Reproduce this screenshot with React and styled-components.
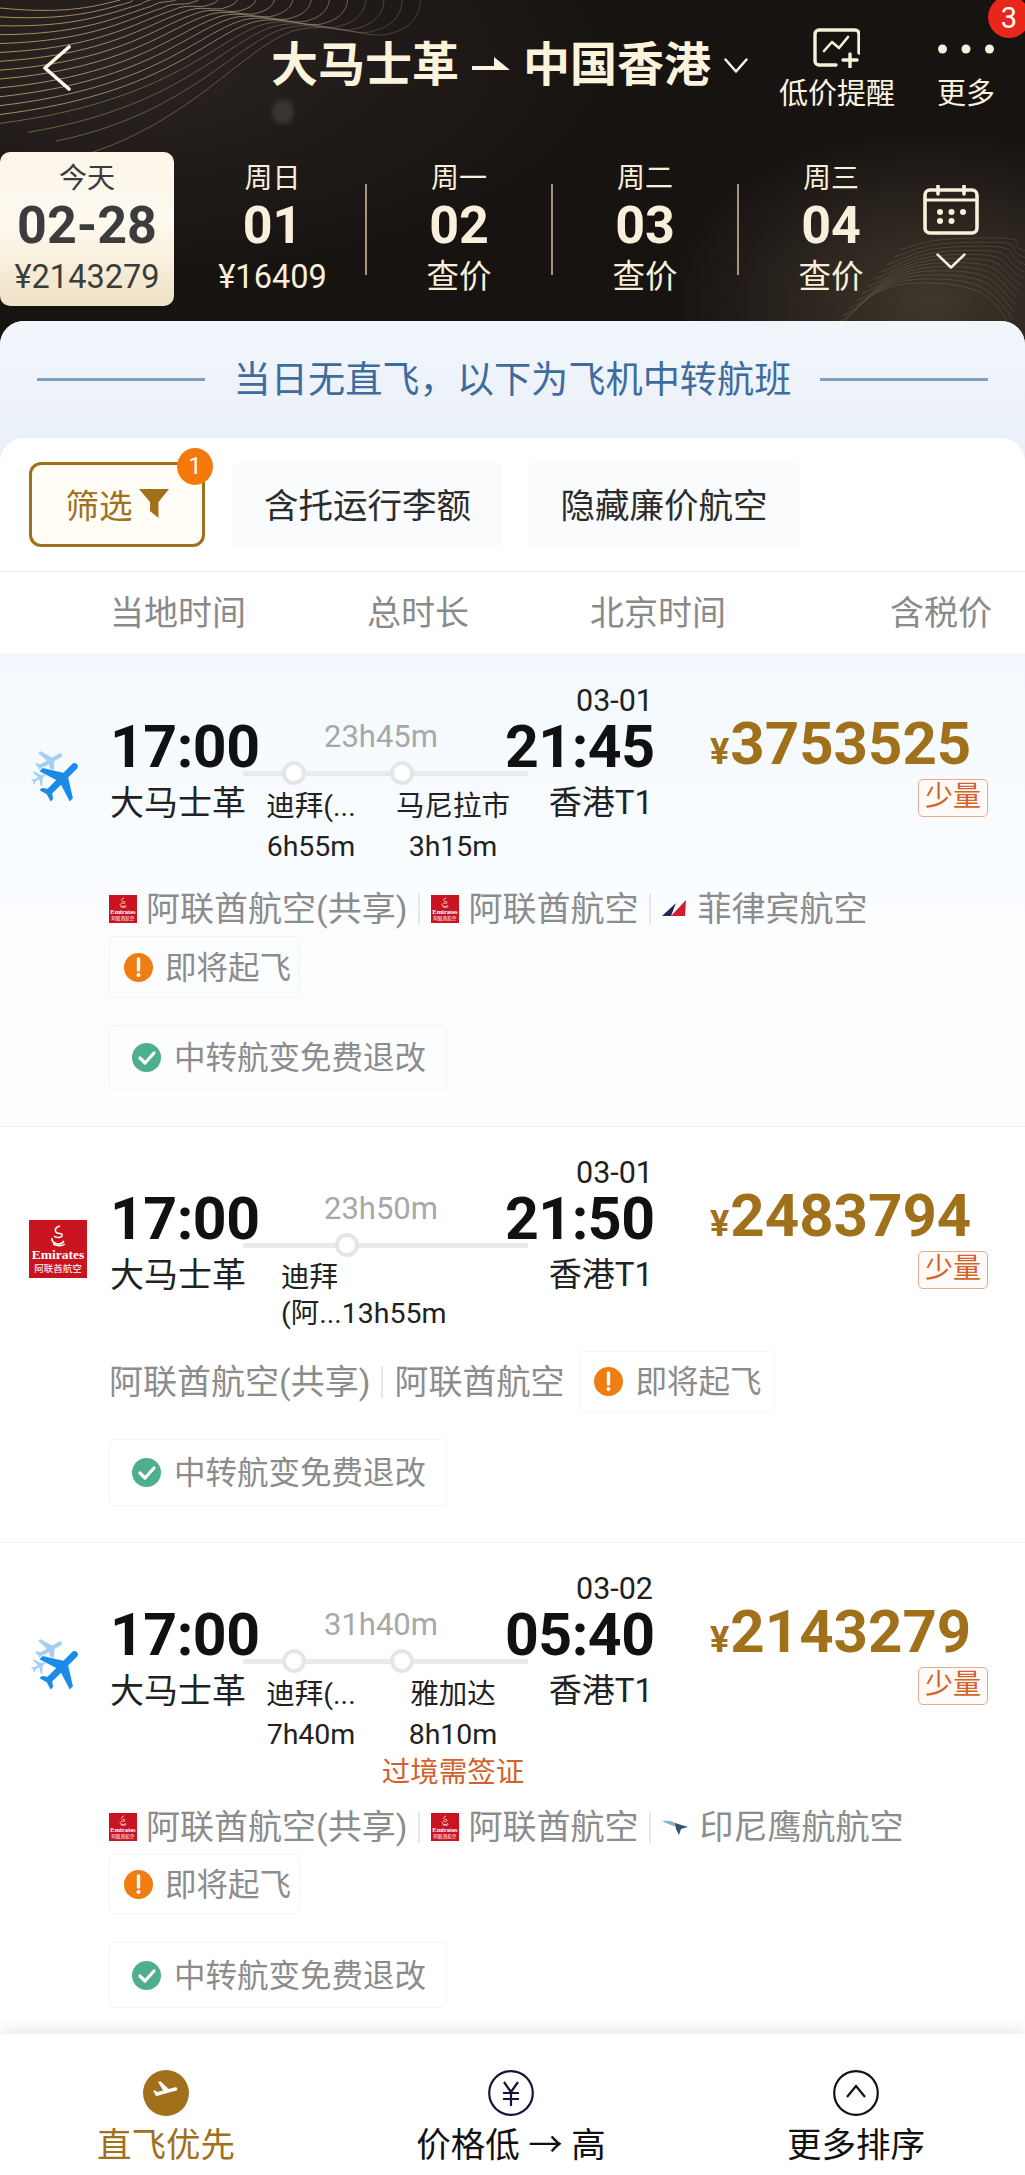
import React from "react";
import styled, { createGlobalStyle } from "styled-components";

const GOLD = "#a0701a";
const CREAM = "#f8f0da";

const GlobalStyle = createGlobalStyle`
  html, body { margin: 0; padding: 0; background: #fff; }
  * { box-sizing: border-box; }
  body { font-family: Roboto, "Noto Sans CJK SC", sans-serif; }
`;

const Screen = styled.div`
  width: 1025px;
  height: 2175px;
  overflow: hidden;
  display: flex;
  flex-direction: column;
`;

/* ---------- header ---------- */
const Header = styled.header`
  position: relative;
  height: 345px;
  flex: none;
  overflow: hidden;
  background: radial-gradient(ellipse 260px 170px at 930px 300px, #3f372c 0%, rgba(63, 55, 44, 0) 100%),
    radial-gradient(ellipse 500px 220px at 120px 60px, #2a2421 0%, rgba(42, 36, 33, 0) 100%), #171311;
`;
const Backdrop = styled.svg`
  position: absolute;
  left: 0;
  top: 0;
`;
const TopBar = styled.div`
  position: relative;
  height: 152px;
  padding: 28px 30px 0 42px;
  display: flex;
  align-items: flex-start;
`;
const Back = styled.svg`
  margin-top: 17px;
  margin-right: 199px;
  flex: none;
`;
const Title = styled.div`
  margin-top: 14px;
  display: flex;
  align-items: center;
  gap: 13px;
  font-size: 47px;
  line-height: 46px;
  font-weight: 700;
  color: #fbf3dc;
`;
const Actions = styled.div`
  margin-left: auto;
  display: flex;
  gap: 42px;
`;
const Action = styled.div`
  display: flex;
  flex-direction: column;
  align-items: center;
  font-size: 29px;
  line-height: 32px;
  color: #fbf3e2;
  svg {
    margin-bottom: 10px;
  }
`;
const RedBadge = styled.div`
  position: absolute;
  right: -5px;
  top: -4px;
  width: 42px;
  height: 42px;
  border-radius: 50%;
  background: #e8261c;
  color: #fff;
  font-size: 29px;
  line-height: 44px;
  text-align: center;
`;
const DateStrip = styled.div`
  position: relative;
  height: 154px;
  display: flex;
  align-items: stretch;
`;
const DayCol = styled.div`
  width: ${(p) => p.$w || 184}px;
  margin-left: ${(p) => p.$ml || 0}px;
  flex: none;
  display: flex;
  flex-direction: column;
  align-items: center;
  padding-top: 10px;
  color: ${(p) => (p.$active ? "#3c3c3c" : CREAM)};
  background: ${(p) => (p.$active ? "linear-gradient(180deg, #fbf6e8 0%, #fffaf0 45%, #efe2c6 100%)" : "none")};
  border-radius: ${(p) => (p.$active ? "10px" : "0")};
`;
const Week = styled.div`
  font-size: 28px;
  line-height: 34px;
`;
const DayNum = styled.div`
  margin-top: 5px;
  font-size: 52px;
  line-height: 50px;
  font-weight: 700;
`;
const DayPrice = styled.div`
  margin-top: 8px;
  font-size: 32.5px;
  line-height: 36px;
`;
const DaySep = styled.div`
  flex: none;
  align-self: center;
  width: 2px;
  height: 91px;
  background: #a8957d;
`;
const CalendarCol = styled.div`
  width: 56px;
  flex: none;
  padding-top: 33px;
  display: flex;
  flex-direction: column;
  align-items: center;
  gap: 18px;
`;

/* ---------- notice + filters ---------- */
const Body = styled.main`
  position: relative;
  margin-top: -24px;
  flex: 1;
  border-radius: 24px 24px 0 0;
  overflow: hidden;
  background: #fff;
  display: flex;
  flex-direction: column;
`;
const NoticeBand = styled.div`
  height: 141px;
  flex: none;
  padding: 0 37px 24px;
  display: flex;
  align-items: center;
  justify-content: space-between;
  background: linear-gradient(180deg, #f2f5fb 0%, #e9f0f9 100%);
  color: #3f6c9f;
  font-size: 37.2px;
  line-height: 44px;
`;
const NoticeLine = styled.div`
  width: 168px;
  height: 3px;
  background: #7f9fc1;
`;
const List = styled.div`
  margin-top: -24px;
  position: relative;
  border-radius: 24px 24px 0 0;
  background: #fff;
`;
const FilterRow = styled.div`
  height: 134px;
  padding: 24px 0 24px 29px;
  display: flex;
  border-bottom: 1px solid #eceef1;
`;
const FilterButton = styled.div`
  position: relative;
  width: 176px;
  height: 85px;
  margin-right: 28px;
  padding-bottom: 3px;
  display: flex;
  align-items: center;
  justify-content: center;
  gap: 6px;
  border: 3px solid ${GOLD};
  border-radius: 12px;
  background: #fffdf6;
  color: ${GOLD};
  font-size: 33.5px;
`;
const CountBadge = styled.div`
  position: absolute;
  left: 145px;
  top: -17px;
  width: 36px;
  height: 37px;
  border-radius: 50%;
  background: #f5780a;
  color: #fff;
  font-size: 24px;
  line-height: 37px;
  text-align: center;
`;
const FilterChip = styled.div`
  width: ${(p) => p.$w}px;
  height: 85px;
  margin-right: 26px;
  padding-bottom: 3px;
  display: flex;
  align-items: center;
  justify-content: center;
  background: #f9fbfd;
  border-radius: 6px;
  color: #2c2c2c;
  font-size: 34.5px;
`;
const SortHeader = styled.div`
  height: 83px;
  padding: 0 33px 5px 110px;
  display: grid;
  grid-template-columns: 257px 223px 1fr auto;
  align-items: center;
  border-bottom: 1px solid #eef0f2;
  color: #8a8a8a;
  font-size: 34px;
`;

/* ---------- flight card ---------- */
const Card = styled.article`
  padding: 30px 0 ${(p) => (p.$last ? 27 : 36)}px;
  border-bottom: ${(p) => (p.$last ? "none" : "1px solid #eef0f2")};
  background: ${(p) => (p.$tinted ? "linear-gradient(180deg, #f3f9fe 0%, #fbfdff 55%, #fefeff 100%)" : "#fff")};
`;
const TopRow = styled.div`
  height: ${(p) => p.$h}px;
  display: flex;
  align-items: flex-start;
`;
const LogoCol = styled.div`
  width: 110px;
  flex: none;
  padding: ${(p) => (p.$plane ? 65 : 63)}px 0 0 6px;
  display: flex;
  justify-content: center;
`;
const Col = styled.div`
  width: ${(p) => p.$w}px;
  flex: none;
  padding-top: 32px;
  text-align: ${(p) => p.$align || "left"};
`;
const DateAbove = styled.div`
  margin-top: -32px;
  height: 32px;
  font-size: 30.5px;
  line-height: 32px;
  color: #222;
`;
const Time = styled.div`
  font-size: 59px;
  line-height: 60px;
  font-weight: 700;
  letter-spacing: -0.5px;
  color: #111;
`;
const Place = styled.div`
  margin-top: 4px;
  font-size: 34px;
  line-height: 44px;
  color: #222;
  white-space: nowrap;
`;
const Terminal = styled(Place)`
  font-size: 33px;
`;
const Duration = styled.div`
  height: 40px;
  padding-left: 74px;
  font-size: 31px;
  line-height: 40px;
  color: #a8a8a8;
`;
const Track = styled.div`
  margin: 4px 0 0 -7px;
  width: 285px;
  height: 24px;
  padding-left: ${(p) => p.$pad}px;
  display: flex;
  gap: 84px;
  background: linear-gradient(#e8ebee, #e8ebee) center / 100% 5px no-repeat;
`;
const StopDot = styled.div`
  width: 24px;
  height: 24px;
  border-radius: 50%;
  background: #fff;
  border: 4px solid #e3e6e9;
`;
const Stops = styled.div`
  margin-top: 3px;
  width: 284px;
  display: flex;
  font-size: 28.5px;
  line-height: 38px;
  color: #222;
`;
const Stop = styled.div`
  width: ${(p) => p.$w}px;
  flex: none;
  text-align: center;
  white-space: nowrap;
`;
const StopDuration = styled.div`
  margin-top: 2px;
`;
const VisaNote = styled.div`
  color: #d2622a;
`;
const LongStop = styled.div`
  margin-left: 31px;
  line-height: 36px;
  white-space: nowrap;
`;
const PriceCol = styled.div`
  width: 278px;
  margin-left: 57px;
  flex: none;
  padding-top: 29px;
  display: flex;
  flex-direction: column;
`;
const Price = styled.div`
  display: flex;
  align-items: baseline;
  height: 60px;
  line-height: 60px;
  color: ${GOLD};
  font-weight: 700;
  font-size: 60px;
`;
const Yen = styled.span`
  font-size: 36px;
  margin-right: 1px;
`;
const StockTag = styled.div`
  margin-top: 5px;
  align-self: flex-end;
  width: 70px;
  height: 38px;
  border: 1px solid #e4ab90;
  border-radius: 5px;
  background: #fffaf7;
  color: #d2622a;
  font-size: 28px;
  line-height: 34px;
  text-align: center;
`;
const CarrierRow = styled.div`
  padding-left: 109px;
  padding-right: 30px;
  display: flex;
  flex-wrap: wrap;
  align-items: center;
  row-gap: 7px;
  color: #8c8c8c;
  font-size: 34px;
`;
const Carrier = styled.div`
  height: 40px;
  display: flex;
  align-items: center;
  gap: 9px;
  white-space: nowrap;
`;
const CarrierName = styled.span`
  margin-bottom: 5px;
`;
const CarrierSep = styled.div`
  width: 2px;
  height: 32px;
  margin: 0 11px;
  background: #e6e8ea;
`;
const InfoChip = styled.div`
  height: ${(p) => p.$h}px;
  width: ${(p) => p.$w}px;
  margin-left: ${(p) => p.$ml || 0}px;
  padding-left: ${(p) => p.$pl}px;
  display: flex;
  align-items: center;
  gap: ${(p) => p.$gap}px;
  border: 1px solid #f4f5f7;
  border-radius: 5px;
  color: #8c8c8c;
  font-size: 31.5px;
  white-space: nowrap;
`;
const ChipLabel = styled.span`
  margin-bottom: 5px;
`;
const FreeRow = styled.div`
  margin-top: ${(p) => p.$mt || 27}px;
  padding-left: 109px;
`;

/* ---------- footer ---------- */
const Footer = styled.footer`
  position: relative;
  height: 141px;
  flex: none;
  padding: 36px 0 0 66px;
  display: grid;
  grid-template-columns: repeat(3, 200px);
  column-gap: 145px;
  background: #fff;
  box-shadow: 0 -6px 14px rgba(0, 0, 0, 0.08);
`;
const SortOption = styled.div`
  display: flex;
  flex-direction: column;
  align-items: center;
  gap: 7px;
  color: ${(p) => (p.$active ? GOLD : "#111")};
  font-size: 34.5px;
  line-height: 44px;
  white-space: nowrap;
`;

/* ---------- drawings ---------- */
const lerp = (a, b, t) => Math.round((a + (b - a) * t) * 10) / 10;

const contourA = Array.from({ length: 17 }, (_, i) => {
  const t = i / 16;
  const y0 = i === 16 ? 155 : 8 + 142 * t;
  const x0 = i > 13 ? (i - 13) * 28 : 0;
  const pts = [
    [lerp(60, 190, t), lerp(14, 122, t)],
    [lerp(90, 240, t), lerp(8, 52, t)],
    [lerp(120, 290, t), lerp(0, 32, t)],
    [lerp(122, 330, t), lerp(-4, 18, t)],
    [lerp(124, 370, t), lerp(-6, 42, t)],
    [lerp(126, 392, t), lerp(-8, 33, t)],
    [lerp(128, 416, t), lerp(-8, 26, t)],
    [lerp(130, 421, t), lerp(-8, 10, t)],
    [lerp(130, 420, t), lerp(-8, -2, t)],
  ];
  return `M${x0} ${y0} C${pts.slice(0, 3).map((p) => p.join(" ")).join(",")} C${pts.slice(3, 6).map((p) => p.join(" ")).join(",")} C${pts.slice(6).map((p) => p.join(" ")).join(",")}`;
});

const contourB = Array.from({ length: 12 }, (_, i) => {
  const t = i / 11;
  const y = lerp(238, 283, t);
  const x = lerp(900, 830, t);
  const y0 = lerp(250, 330, t);
  return `M${x} ${y0} C${x + 25} ${y0 - 8},${x + 30} ${y},${x + 90} ${y} C${x + 140} ${y},${lerp(1000, 990, t)} ${lerp(246, 290, t)},${lerp(1030, 1010, t)} ${lerp(252, 325, t)}`;
});

const HeaderBackdrop = () => (
  <Backdrop width="1025" height="345" viewBox="0 0 1025 345" fill="none">
    <defs>
      <linearGradient id="goldLine" x1="0" y1="0" x2="420" y2="60" gradientUnits="userSpaceOnUse">
        <stop offset="0" stopColor="#d9b56c" />
        <stop offset="0.5" stopColor="#a99a7d" />
        <stop offset="1" stopColor="#6f6a62" />
      </linearGradient>
      <filter id="softBlob">
        <feGaussianBlur stdDeviation="2" />
      </filter>
    </defs>
    {contourA.map((d, i) => (
      <path key={i} d={d} stroke="url(#goldLine)" strokeWidth="1" opacity={i > 12 ? 0.45 : 0.75} />
    ))}
    {contourB.map((d, i) => (
      <path key={i} d={d} stroke="#8d7b5c" strokeWidth="1" opacity="0.3" />
    ))}
    <ellipse cx="283" cy="112" rx="11" ry="12" fill="#fff" opacity="0.1" filter="url(#softBlob)" />
  </Backdrop>
);

const Chevron = ({ w, h, color = CREAM, sw = 2.5 }) => (
  <svg width={w} height={h} viewBox={`0 0 ${w} ${h}`} fill="none">
    <path d={`M1.5 1.5 L${w / 2} ${h - 1.5} L${w - 1.5} 1.5`} stroke={color} strokeWidth={sw} strokeLinecap="round" strokeLinejoin="round" />
  </svg>
);

const RouteArrow = () => (
  <svg width="38" height="16" viewBox="0 0 38 16" fill="#fbf3dc">
    <path d="M0 9h22l0-9 16 13H0z" />
  </svg>
);

const AlertIcon = () => (
  <svg width="47" height="40" viewBox="0 0 47 40" fill="none" stroke={CREAM} strokeLinecap="round" strokeLinejoin="round">
    <path d="M23 37H6a4 4 0 0 1-4-4V6a4 4 0 0 1 4-4h36a4 4 0 0 1 4 4v19" strokeWidth="3.4" />
    <path d="M11 23l8-9 7 6 9-11" strokeWidth="2.6" />
    <path d="M37 26v13M30 32h14" strokeWidth="3.4" />
  </svg>
);

const MoreIcon = () => (
  <svg width="56" height="40" viewBox="0 0 56 40" fill={CREAM}>
    <circle cx="4.5" cy="21" r="4.5" />
    <circle cx="28" cy="21" r="4.5" />
    <circle cx="51.5" cy="21" r="4.5" />
  </svg>
);

const CalendarIcon = () => (
  <svg width="56" height="50" viewBox="0 0 56 50" fill="none">
    <rect x="2" y="5" width="52" height="43" rx="5" stroke={CREAM} strokeWidth="3.6" />
    <path d="M2 15h52" stroke={CREAM} strokeWidth="3" />
    <path d="M15 1v8M41 1v8" stroke={CREAM} strokeWidth="3.6" strokeLinecap="round" />
    <g fill={CREAM}>
      <circle cx="17" cy="27" r="3" />
      <circle cx="28.5" cy="27" r="3" />
      <circle cx="40" cy="27" r="3" />
      <circle cx="17" cy="36" r="3" />
      <circle cx="28.5" cy="36" r="3" />
    </g>
  </svg>
);

const FunnelIcon = () => (
  <svg width="30" height="29" viewBox="0 0 30 29" fill={GOLD}>
    <path d="M0 0h30L19.5 13v16L11 22V13z" />
  </svg>
);

const FLIGHT = "M21 16v-2l-8-5V3.5c0-.83-.67-1.5-1.5-1.5S10 2.67 10 3.5V9l-8 5v2l8-2.5V19l-2 1.5V22l3.5-1 3.5 1v-1.5L13 19v-5.5l8 2.5z";

const PlanesIcon = () => (
  <svg width="54" height="54" viewBox="0 0 54 54">
    <g fill="#a4cff2">
      <path d={FLIGHT} transform="translate(19 12) rotate(60) scale(1.4) translate(-12 -12)" />
      <path d={FLIGHT} transform="translate(9 28) rotate(60) scale(.85) translate(-12 -12)" />
    </g>
    <path
      d={FLIGHT}
      fill="#1a8ce8"
      stroke="#fff"
      strokeWidth="0.8"
      paintOrder="stroke"
      transform="translate(30 30) rotate(45) scale(2.25) translate(-11.5 -12)"
    />
  </svg>
);

const EmiratesLogo = ({ size }) => (
  <svg width={size} height={size} viewBox="0 0 58 58">
    <rect width="58" height="58" fill="#c9141f" />
    <g fill="none" stroke="#fff" strokeWidth="1.5">
      <path d="M31 6c-5 1-6 5-3 7 3 1 6 0 5 3-1 2-6 2-8 0" />
      <path d="M23 18c-1 6 9 8 12 3M24 24c4 2 9 2 12 0" />
    </g>
    <text x="29" y="39" textAnchor="middle" fill="#fff" fontSize="13.5" fontWeight="700" fontFamily="Liberation Serif, serif">
      Emirates
    </text>
    <text x="29" y="52" textAnchor="middle" fill="#fff" fontSize="9.5" fontFamily="Noto Sans CJK SC, sans-serif">
      阿联酋航空
    </text>
  </svg>
);

const PalLogo = () => (
  <svg width="26" height="18" viewBox="0 0 26 18">
    <path d="M0 16 L14 3 L9 16z" fill="#1e2a55" />
    <path d="M9 16 L24 0 L23 16z" fill="#cf1f2c" />
  </svg>
);

const GarudaLogo = () => (
  <svg width="28" height="18" viewBox="0 0 28 18">
    <path d="M0 3c6-1 11 0 15 3l4 2-4 1c-4-1-9-3-15-6z" fill="#7fb4c8" />
    <path d="M13 5l13 4-7 2-2 6-3-6z" fill="#33556b" />
  </svg>
);

const AlertDot = () => (
  <svg width="29" height="29" viewBox="0 0 29 29">
    <circle cx="14.5" cy="14.5" r="14.5" fill="#f07d12" />
    <path d="M14.5 6v11" stroke="#fff" strokeWidth="3.4" strokeLinecap="round" />
    <circle cx="14.5" cy="22" r="2" fill="#fff" />
  </svg>
);

const CheckDot = () => (
  <svg width="29" height="29" viewBox="0 0 29 29" fill="none">
    <circle cx="14.5" cy="14.5" r="14.5" fill="#4fae8c" />
    <path d="M8 15l5 5 9-10" stroke="#fff" strokeWidth="3.2" strokeLinecap="round" strokeLinejoin="round" />
  </svg>
);

const DirectIcon = () => (
  <svg width="46" height="46" viewBox="0 0 46 46">
    <circle cx="23" cy="23" r="23" fill={GOLD} />
    <path
      transform="translate(9 7) scale(1.2)"
      fill="#fff"
      d="M21.07 9.64c-.21-.8-1.04-1.28-1.84-1.06L13.92 10l-6.9-6.43-1.93.51 4.14 7.17-4.97 1.33-1.97-1.54-1.45.39 2.59 4.49s7.12-1.9 16.57-4.43c.81-.23 1.28-1.05 1.07-1.85z"
    />
  </svg>
);

const YenIcon = () => (
  <svg width="46" height="46" viewBox="0 0 46 46" fill="none" stroke="#14143a" strokeWidth="2.2">
    <circle cx="23" cy="23" r="21.8" />
    <path d="M16 12l7 10 7-10M15 23h16M15 29h16M23 22v14" />
  </svg>
);

const UpIcon = () => (
  <svg width="46" height="46" viewBox="0 0 46 46" fill="none" stroke="#111" strokeWidth="2.2">
    <circle cx="23" cy="23" r="21.8" />
    <path d="M14 27l9-11 9 11" />
  </svg>
);

/* ---------- data ---------- */
const days = [
  { week: "周日", num: "01", price: "¥16409", w: 185, ml: 6 },
  { week: "周一", num: "02", price: "查价" },
  { week: "周二", num: "03", price: "查价" },
  { week: "周三", num: "04", price: "查价" },
];

const flights = [
  {
    id: 1,
    tinted: true,
    logo: "planes",
    rowH: 204,
    date: "03-01",
    arrive: "21:45",
    total: "23h45m",
    price: "3753525",
    stops: [
      { name: "迪拜(...", time: "6h55m", w: 122 },
      { name: "马尼拉市", time: "3h15m", w: 162 },
    ],
    carriers: [
      { name: "阿联酋航空(共享)", logo: "ek" },
      { name: "阿联酋航空", logo: "ek" },
      { name: "菲律宾航空", logo: "pal" },
    ],
    alert: { h: 62, w: 191 },
    free: { h: 65, mt: 27 },
  },
  {
    id: 2,
    logo: "ek",
    rowH: 194,
    date: "03-01",
    arrive: "21:50",
    total: "23h50m",
    price: "2483794",
    longStop: ["迪拜", "(阿...13h55m"],
    carriers: [
      { name: "阿联酋航空(共享)" },
      { name: "阿联酋航空" },
    ],
    alert: { h: 61, w: 196, ml: 15 },
    free: { h: 67, mt: 27 },
  },
  {
    id: 3,
    last: true,
    logo: "planes",
    rowH: 234,
    date: "03-02",
    arrive: "05:40",
    total: "31h40m",
    price: "2143279",
    stops: [
      { name: "迪拜(...", time: "7h40m", w: 122 },
      { name: "雅加达", time: "8h10m", note: "过境需签证", w: 162 },
    ],
    carriers: [
      { name: "阿联酋航空(共享)", logo: "ek" },
      { name: "阿联酋航空", logo: "ek" },
      { name: "印尼鹰航航空", logo: "ga" },
    ],
    alert: { h: 60, w: 191 },
    free: { h: 66, mt: 28 },
  },
];

const carrierLogo = (kind) => {
  if (kind === "ek") return <EmiratesLogo size={28} />;
  if (kind === "pal") return <PalLogo />;
  if (kind === "ga") return <GarudaLogo />;
  return null;
};

const FlightCard = ({ flight }) => (
  <Card $tinted={flight.tinted} $last={flight.last}>
    <TopRow $h={flight.rowH}>
      <LogoCol $plane={flight.logo === "planes"}>
        {flight.logo === "planes" ? <PlanesIcon /> : <EmiratesLogo size={58} />}
      </LogoCol>
      <Col $w={140}>
        <Time>17:00</Time>
        <Place>大马士革</Place>
      </Col>
      <Col $w={255}>
        <Duration>{flight.total}</Duration>
        <Track $pad={flight.stops ? 39 : 92}>
          {(flight.stops || [{ name: "single" }]).map((s) => (
            <StopDot key={s.name} />
          ))}
        </Track>
        <Stops>
          {flight.stops ? (
            flight.stops.map((s) => (
              <Stop key={s.name} $w={s.w}>
                <div>{s.name}</div>
                <StopDuration>{s.time}</StopDuration>
                {s.note && <VisaNote>{s.note}</VisaNote>}
              </Stop>
            ))
          ) : (
            <LongStop>
              {flight.longStop.map((line) => (
                <div key={line}>{line}</div>
              ))}
            </LongStop>
          )}
        </Stops>
      </Col>
      <Col $w={148} $align="right">
        <DateAbove>{flight.date}</DateAbove>
        <Time>{flight.arrive}</Time>
        <Terminal>香港T1</Terminal>
      </Col>
      <PriceCol>
        <Price>
          <Yen>¥</Yen>
          {flight.price}
        </Price>
        <StockTag>少量</StockTag>
      </PriceCol>
    </TopRow>
    <CarrierRow>
      {flight.carriers.map((c, i) => (
        <React.Fragment key={c.name}>
          {i > 0 && <CarrierSep />}
          <Carrier>
            {carrierLogo(c.logo)}
            <CarrierName>{c.name}</CarrierName>
          </Carrier>
        </React.Fragment>
      ))}
      <InfoChip $h={flight.alert.h} $w={flight.alert.w} $ml={flight.alert.ml} $pl={14} $gap={12}>
        <AlertDot />
        <ChipLabel>即将起飞</ChipLabel>
      </InfoChip>
    </CarrierRow>
    <FreeRow $mt={flight.free.mt}>
      <InfoChip $h={flight.free.h} $w={338} $pl={22} $gap={13}>
        <CheckDot />
        <ChipLabel>中转航变免费退改</ChipLabel>
      </InfoChip>
    </FreeRow>
  </Card>
);

export default function App() {
  return (
    <Screen>
      <GlobalStyle />
      <Header>
        <HeaderBackdrop />
        <TopBar>
          <Back width="30" height="46" viewBox="0 0 30 46" fill="none">
            <path d="M27 2 L3 23 L27 44" stroke="#fdf8ea" strokeWidth="3.6" strokeLinecap="round" strokeLinejoin="round" />
          </Back>
          <Title>
            <span>大马士革</span>
            <RouteArrow />
            <span>中国香港</span>
            <Chevron w={24} h={15} />
          </Title>
          <Actions>
            <Action>
              <AlertIcon />
              低价提醒
            </Action>
            <Action>
              <MoreIcon />
              更多
            </Action>
          </Actions>
          <RedBadge>3</RedBadge>
        </TopBar>
        <DateStrip>
          <DayCol $active $w={174}>
            <Week>今天</Week>
            <DayNum>02-28</DayNum>
            <DayPrice>¥2143279</DayPrice>
          </DayCol>
          {days.map((d, i) => (
            <React.Fragment key={d.num}>
              {i > 0 && <DaySep />}
              <DayCol $w={d.w} $ml={d.ml}>
                <Week>{d.week}</Week>
                <DayNum>{d.num}</DayNum>
                <DayPrice>{d.price}</DayPrice>
              </DayCol>
            </React.Fragment>
          ))}
          <CalendarCol>
            <CalendarIcon />
            <Chevron w={30} h={16} />
          </CalendarCol>
        </DateStrip>
      </Header>
      <Body>
        <NoticeBand>
          <NoticeLine />
          <span>当日无直飞，以下为飞机中转航班</span>
          <NoticeLine />
        </NoticeBand>
        <List>
          <FilterRow>
            <FilterButton>
              筛选
              <FunnelIcon />
              <CountBadge>1</CountBadge>
            </FilterButton>
            <FilterChip $w={269}>含托运行李额</FilterChip>
            <FilterChip $w={272}>隐藏廉价航空</FilterChip>
          </FilterRow>
          <SortHeader>
            <span>当地时间</span>
            <span>总时长</span>
            <span>北京时间</span>
            <span>含税价</span>
          </SortHeader>
          {flights.map((f) => (
            <FlightCard key={f.id} flight={f} />
          ))}
        </List>
      </Body>
      <Footer>
        <SortOption $active>
          <DirectIcon />
          直飞优先
        </SortOption>
        <SortOption>
          <YenIcon />
          价格低 → 高
        </SortOption>
        <SortOption>
          <UpIcon />
          更多排序
        </SortOption>
      </Footer>
    </Screen>
  );
}
